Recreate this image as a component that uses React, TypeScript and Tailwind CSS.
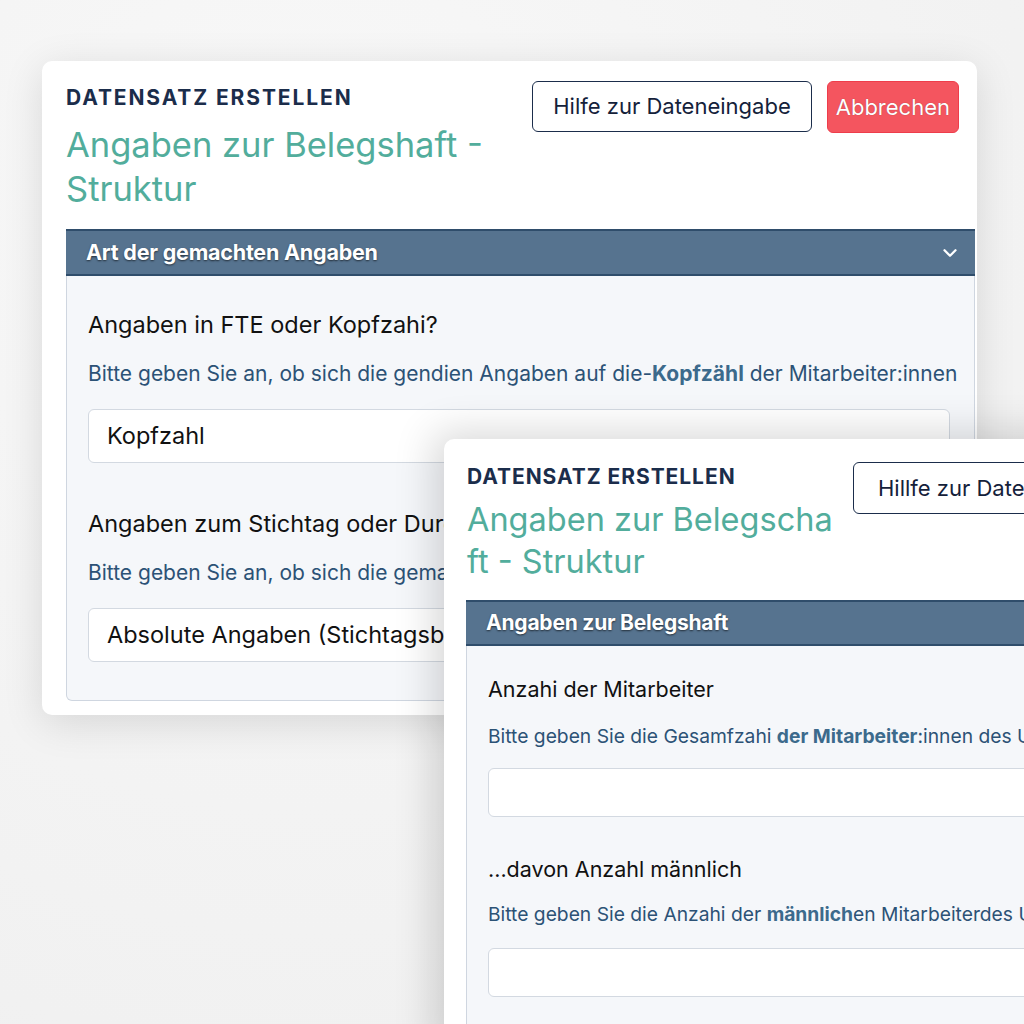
import { ChevronDown } from 'lucide-react';

const font = { fontFamily: 'Inter, "Noto Sans", sans-serif' };

const Label = ({ children, className = '' }: { children: React.ReactNode; className?: string }) => (
  <p className={`leading-[30px] text-[#111] whitespace-nowrap ${className}`}>{children}</p>
);

const Help = ({ children, className = '' }: { children: React.ReactNode; className?: string }) => (
  <p className={`leading-[28px] text-[#2c5276] whitespace-nowrap ${className}`}>{children}</p>
);

const Strong = ({ children }: { children: React.ReactNode }) => (
  <span className="font-bold text-[#3c6a8c]">{children}</span>
);

const App = () => {
  return (
    <div
      style={font}
      className="relative w-[1024px] h-[1024px] overflow-hidden bg-[radial-gradient(circle_at_30%_20%,#f8f8f8,#efefef)]"
    >
      {/* Card 1 */}
      <div className="ml-[42px] mt-[61px] w-[935px] bg-white rounded-[10px] shadow-[0_8px_40px_rgba(0,0,0,0.12)] pl-6 pr-[2px] pt-[20px] pb-[14px]">
        <div className="flex justify-between pr-[16px]">
          <div className="pt-[3px]">
            <p className="text-[21px] leading-[28px] font-bold tracking-[0.09em] text-[#1b2d4b]">DATENSATZ ERSTELLEN</p>
            <h1 className="mt-[11px] w-[440px] text-[34.5px] leading-[44px] text-[#52ad9c]">
              Angaben zur Belegshaft - Struktur
            </h1>
          </div>
          <div className="flex gap-[15px] items-start">
            <button className="h-[51px] px-[20px] border-[1.5px] border-[#1b2d4b] rounded-[6px] text-[22px] text-[#14213a]">
              Hilfe zur Dateneingabe
            </button>
            <button className="h-[52px] px-[8px] bg-[#f4555f] border border-[#ee3d4b] rounded-[6px] text-[22px] text-white [text-shadow:0_0_1px_rgba(0,0,0,0.4)]">
              Abbrechen
            </button>
          </div>
        </div>

        <div className="mt-[18px]">
          <div className="h-[47px] flex items-center justify-between pl-5 pr-[14px] bg-[#56738f] border-y-2 border-[#2f4d6b]">
            <span className="text-[21.5px] font-bold text-white tracking-[-0.01em] [text-shadow:0_1px_2px_rgba(0,0,0,0.6)]">
              Art der gemachten Angaben
            </span>
            <ChevronDown className="w-[22px] h-[22px] text-white" strokeWidth={2.5} />
          </div>
          <div className="bg-[#f5f7fa] border-x border-b border-[#cfd6e0] rounded-b-[6px] pl-[21px] pr-[24px] pt-[34px] pb-[38px]">
            <Label className="text-[23.5px]">Angaben in FTE oder Kopfzahi?</Label>
            <Help className="mt-[20px] text-[21px]">
              Bitte geben Sie an, ob sich die gendien Angaben auf die-<Strong>Kopfzähl</Strong> der Mitarbeiter:innen
            </Help>
            <div className="mt-[21px] h-[54px] flex items-center px-[18px] bg-white border border-[#d3d9e1] rounded-[6px] text-[23.5px] text-[#111]">
              Kopfzahl
            </div>
            <Label className="mt-[46px] text-[23.5px]">Angaben zum Stichtag oder Durchschnittswerte?</Label>
            <Help className="mt-[20px] text-[21px]">
              Bitte geben Sie an, ob sich die gemachten Angaben auf einen Stichtag beziehen
            </Help>
            <div className="mt-[21px] h-[54px] flex items-center px-[18px] bg-white border border-[#d3d9e1] rounded-[6px] text-[23.5px] text-[#111]">
              Absolute Angaben (Stichtagsbezogen)
            </div>
          </div>
        </div>
      </div>

      {/* Card 2, overlapping window */}
      <div className="absolute left-[444px] top-[439px] w-[640px] h-[620px] bg-white rounded-tl-[10px] shadow-[-10px_-6px_40px_rgba(0,0,0,0.16)] pl-[22px] pt-[24px]">
        <div className="flex">
          <div className="pl-[1px]">
            <p className="text-[21px] leading-[28px] font-bold tracking-[0.045em] text-[#1b2d4b]">DATENSATZ ERSTELLEN</p>
            <h1 className="mt-[8px] w-[366px] break-all text-[32.5px] leading-[42px] text-[#52ad9c]">
              Angaben zur Belegschaft - Struktur
            </h1>
          </div>
          <div className="ml-[20px] -mt-[1px]">
            <button className="h-[52px] px-[24px] border-[1.5px] border-[#1b2d4b] rounded-[6px] text-[22px] text-[#14213a] whitespace-nowrap">
              Hillfe zur Dateneingabe
            </button>
          </div>
        </div>

        <div className="mt-[17px]">
          <div className="h-[46px] flex items-center pl-5 bg-[#56738f] border-y-2 border-[#2f4d6b]">
            <span className="text-[21px] font-bold text-white tracking-[-0.01em] [text-shadow:0_1px_2px_rgba(0,0,0,0.6)]">
              Angaben zur Belegshaft
            </span>
          </div>
          <div className="bg-[#f5f7fa] border-l border-[#cfd6e0] pl-[21px] pt-[28px] pb-[40px]">
            <Label className="text-[21.5px]">Anzahi der Mitarbeiter</Label>
            <Help className="mt-[18px] text-[19.25px]">
              Bitte geben Sie die Gesamfzahi <Strong>der Mitarbeiter</Strong>:innen des Unternehmens an
            </Help>
            <div className="mt-[18px] h-[49px] bg-white border border-[#d3d9e1] rounded-[6px]" />
            <Label className="mt-[37px] text-[21.5px]">...davon Anzahl männlich</Label>
            <Help className="mt-[16px] text-[19.25px]">
              Bitte geben Sie die Anzahi der <Strong>männlich</Strong>en Mitarbeiterdes Unternehmens an
            </Help>
            <div className="mt-[20px] h-[49px] bg-white border border-[#d3d9e1] rounded-[6px]" />
          </div>
        </div>
      </div>
    </div>
  );
};

export default App;
